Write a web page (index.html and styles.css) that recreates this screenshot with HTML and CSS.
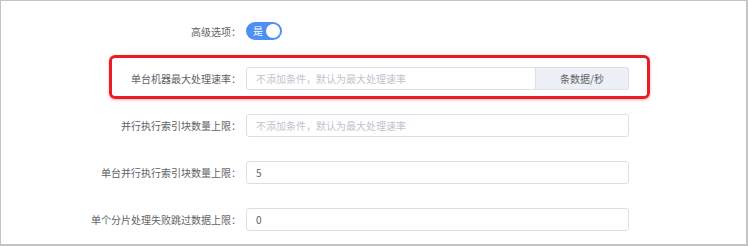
FILE: index.html
```html
<!DOCTYPE html>
<html lang="zh-CN">
<head>
    <meta charset="UTF-8">
    <title>高级选项</title>
    <link rel="stylesheet" href="styles.css">
</head>
<body>
    <div class="panel">
        <div class="form-row switch-row">
            <label class="form-label">高级选项：</label>
            <div class="switch is-on">
                <span class="switch-text">是</span>
                <span class="switch-knob"></span>
            </div>
        </div>

        <!-- highlighted row -->
        <div class="highlight">
            <div class="form-row">
                <label class="form-label">单台机器最大处理速率：</label>
                <div class="input-group">
                    <input class="input" type="text" placeholder="不添加条件，默认为最大处理速率">
                    <span class="input-append">条数据/秒</span>
                </div>
            </div>
        </div>

        <div class="form-row">
            <label class="form-label">并行执行索引块数量上限：</label>
            <input class="input" type="text" placeholder="不添加条件，默认为最大处理速率">
        </div>
        <div class="form-row">
            <label class="form-label">单台并行执行索引块数量上限：</label>
            <input class="input" type="text" value="5">
        </div>
        <div class="form-row">
            <label class="form-label">单个分片处理失败跳过数据上限：</label>
            <input class="input" type="text" value="0">
        </div>
    </div>
</body>
</html>
```

FILE: styles.css
```css
body {
    margin: 0;
    font-family: "Noto Sans CJK SC", "Noto Sans", sans-serif;
    font-size: 10px;
    color: #5f6266;
    background-color: #fff;
}

.panel {
    width: 748px;
    height: 246px;
    border: 1px solid #c4c4c4;
    border-right-width: 2px;
    border-bottom-width: 2px;
    padding-top: 21px;
    box-sizing: border-box;
}

.form-row {
    display: flex;
    align-items: center;
    height: 23px;
    margin-bottom: 24px;
}

.form-label {
    width: 240px;
    padding-right: 5px;
    text-align: right;
    white-space: nowrap;
    line-height: 23px;
}

.switch-row {
    height: 18px;
    margin-bottom: 15px;
}

.switch {
    position: relative;
    width: 36px;
    height: 18px;
    border-radius: 9px;
    background-color: #4d8ff3;
}

.switch-text {
    color: #fff;
    font-size: 10px;
    line-height: 18px;
    padding-left: 7px;
}

.switch-knob {
    position: absolute;
    top: 2px;
    right: 2px;
    width: 14px;
    height: 14px;
    border-radius: 50%;
    background-color: #fff;
}

.highlight {
    width: 541px;
    margin-left: 108px;
    margin-bottom: 15px;
    padding: 9px 0 6px;
    border: 3px solid #ec1c26;
    border-radius: 6px;
    box-sizing: border-box;
    box-shadow: 0 1px 3px rgba(200, 0, 0, 0.3);
}

.highlight .form-row {
    margin-bottom: 0;
}

.highlight .form-label {
    width: 129px;
}

.input {
    width: 383px;
    height: 23px;
    padding: 0 9px;
    border: 1px solid #dcdfe6;
    border-radius: 3px;
    box-sizing: border-box;
    font-family: inherit;
    font-size: 10px;
    color: #606266;
    outline: none;
}

.input::placeholder {
    color: #c0c4cc;
}

.input-group {
    display: flex;
    width: 383px;
    height: 23px;
}

.input-group .input {
    flex: 1;
    width: auto;
    border-radius: 3px 0 0 3px;
}

.input-append {
    width: 93px;
    border: 1px solid #dcdfe6;
    border-left: none;
    border-radius: 0 3px 3px 0;
    background-color: #edf0f6;
    color: #606266;
    text-align: center;
    line-height: 21px;
    box-sizing: border-box;
}
```
